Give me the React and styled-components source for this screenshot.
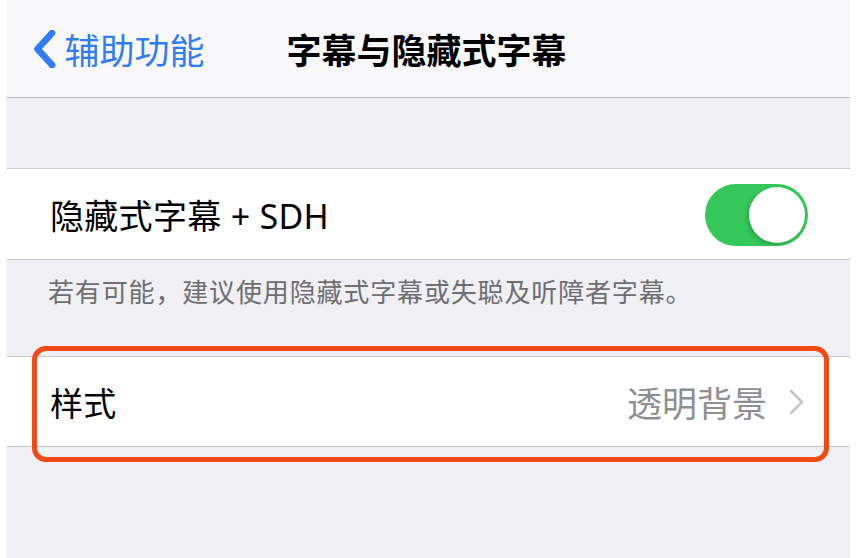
import React from 'react';
import styled, { createGlobalStyle } from 'styled-components';

const GlobalStyle = createGlobalStyle`
  html, body {
    margin: 0;
    padding: 0;
    background: #ffffff;
  }
  body {
    font-family: "Noto Sans", "Noto Sans CJK SC", sans-serif;
  }
`;

const Screen = styled.div`
  margin: 0 8px 0 7px;
  height: 558px;
  background: #efeff4;
  display: flex;
  flex-direction: column;
  overflow: hidden;
`;

const NavBar = styled.div`
  height: 97px;
  flex-shrink: 0;
  background: #f8f8fa;
  border-bottom: 1px solid #b9b9be;
  display: grid;
  grid-template-columns: 1fr auto 1fr;
  align-items: center;
`;

const BackButton = styled.div`
  display: flex;
  align-items: center;
  gap: 8px;
  padding-left: 26px;
  color: #2f7cf6;
  font-size: 35px;
  font-family: "Noto Sans CJK SC", sans-serif;
`;

const Title = styled.div`
  font-size: 35px;
  font-weight: 700;
  color: #000;
  font-family: "Noto Sans CJK SC", sans-serif;
  margin-right: 4px;
`;

const Gap = styled.div`
  height: ${p => p.h}px;
  flex-shrink: 0;
  border-bottom: 1px solid #c8c7cc;
`;

const Cell = styled.div`
  position: relative;
  height: ${p => p.h}px;
  flex-shrink: 0;
  background: #fff;
  border-bottom: 1px solid #c8c7cc;
  display: flex;
  align-items: center;
  padding: 0 ${p => p.pr}px 0 43px;
`;

const Label = styled.div`
  flex: 1;
  font-size: ${p => p.size}px;
  color: #000;
  font-family: "Noto Sans", "Noto Sans CJK SC", sans-serif;
  letter-spacing: 0.3px;
`;

const Value = styled.div`
  font-size: 35px;
  color: #8e8e93;
  font-family: "Noto Sans CJK SC", sans-serif;
  margin-right: 22px;
`;

const Footer = styled.div`
  height: 97px;
  flex-shrink: 0;
  box-sizing: border-box;
  padding: 12px 0 0 41px;
  font-size: 26px;
  color: #6d6d72;
  font-family: "Noto Sans CJK SC", sans-serif;
  border-bottom: 1px solid #c8c7cc;
  letter-spacing: 0.85px;
`;

const Switch = styled.div`
  width: 103px;
  height: 62px;
  border-radius: 31px;
  background: #34c759;
  position: relative;
  flex-shrink: 0;
  margin-top: 2px;
`;

const Knob = styled.div`
  position: absolute;
  top: 3px;
  right: 3px;
  width: 56px;
  height: 56px;
  border-radius: 50%;
  background: #fff;
  box-shadow: -2px 2px 4px rgba(0, 0, 0, 0.18);
`;

const Highlight = styled.div`
  position: absolute;
  left: 25px;
  right: 21px;
  top: -11px;
  bottom: -16px;
  border: 5px solid #f24a17;
  border-radius: 14px;
  pointer-events: none;
`;

const Chevron = ({ size = 26, color = '#2f7cf6', weight = 4.5 }) => (
  <svg width={size * 0.62} height={size} viewBox="0 0 16 26" fill="none">
    <path d="M13 2 L3 13 L13 24" stroke={color} strokeWidth={weight} strokeLinecap="round" strokeLinejoin="round" />
  </svg>
);

const Disclosure = () => (
  <svg width="15" height="26" viewBox="0 0 15 26" fill="none">
    <path d="M2 2 L13 13 L2 24" stroke="#c4c4c9" strokeWidth="2.6" strokeLinecap="round" strokeLinejoin="round" />
  </svg>
);

export default function App() {
  return (
    <>
      <GlobalStyle />
      <Screen>
        <NavBar>
          <BackButton>
            <Chevron size={38} />
            <span>辅助功能</span>
          </BackButton>
          <Title>字幕与隐藏式字幕</Title>
          <div />
        </NavBar>
        <Gap h={70} />
        <Cell h={90} pr={42}>
          <Label size={34}>隐藏式字幕 + SDH</Label>
          <Switch>
            <Knob />
          </Switch>
        </Cell>
        <Footer>若有可能，建议使用隐藏式字幕或失聪及听障者字幕。</Footer>
        <Cell h={89} pr={46}>
          <Label size={33}>样式</Label>
          <Value>透明背景</Value>
          <Disclosure />
          <Highlight />
        </Cell>
      </Screen>
    </>
  );
}
